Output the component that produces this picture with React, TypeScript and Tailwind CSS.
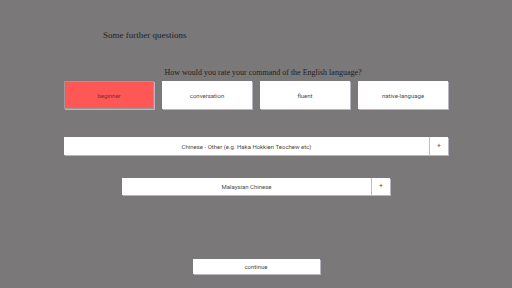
import React from "react";

const levels = ["beginner", "conversation", "fluent", "native-language"];

const Plus = () => (
  <div className="w-[19px] h-full border-l border-[#bdbdbd] flex items-center justify-center text-[7px] text-[#555]">
    +
  </div>
);

const App = () => {
  return (
    <div className="w-[512px] h-[288px] bg-[#7a7879] overflow-hidden font-['Roboto',sans-serif] text-[#4a4a4a]">
      <div className="pt-[29px] pl-[103px] h-[12px] box-content text-[9px] leading-[12px] text-[#222] font-['Liberation_Serif',serif]">
        Some further questions
      </div>

      <p className="mt-[27px] pl-[14px] text-center text-[8px] leading-[10px] text-[#222] font-['Liberation_Serif',serif]">
        How would you rate your command of the English language?
      </p>

      <div className="mt-[3px] mx-auto w-[384px] grid grid-cols-4 gap-[8px]">
        {levels.map((l, i) => (
          <div
            key={l}
            className={
              "h-[28px] flex items-center justify-center text-[6px] shadow-[1px_1px_0_#b9b4c4] " +
              (i === 0 ? "bg-[#ff5656] border border-[#9a9a9a] text-[#7a3030]" : "bg-white")
            }
          >
            {l}
          </div>
        ))}
      </div>

      <div className="mt-[28px] mx-auto w-[384px] h-[18px] bg-white flex shadow-[1px_1px_0_#b9b4c4]">
        <div className="flex-1 flex items-center justify-center text-[6px]">
          Chinese - Other (e.g. Haka Hokkien Teochew etc)
        </div>
        <Plus />
      </div>

      <div className="mt-[23px] mx-auto w-[268px] h-[17px] bg-white flex shadow-[1px_1px_0_#b9b4c4]">
        <div className="flex-1 flex items-center justify-center text-[6px]">
          Malaysian Chinese
        </div>
        <Plus />
      </div>

      <div className="mt-[64px] mx-auto w-[127px] h-[15px] bg-white flex items-center justify-center text-[6px] shadow-[1px_1px_0_#b9b4c4]">
        continue
      </div>
    </div>
  );
};

export default App;
